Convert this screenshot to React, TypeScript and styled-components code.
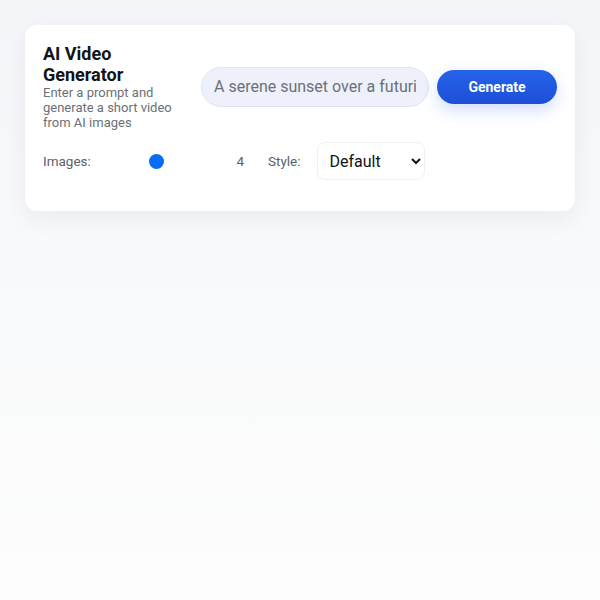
import { useState } from 'react';
import styled, { createGlobalStyle } from 'styled-components';

const GlobalStyle = createGlobalStyle`
  html, body {
    margin: 0;
    padding: 0;
    min-height: 100%;
  }
  body {
    font-family: Roboto, "Liberation Sans", Arial, sans-serif;
    background: linear-gradient(180deg, #f4f5f8 0%, #f9fafb 50%, #fdfdfd 100%);
    min-height: 600px;
  }
`;

const App = () => {
  const [prompt, setPrompt] = useState('A serene sunset over a futuristic city');
  const [count, setCount] = useState(4);
  const [style, setStyle] = useState('default');

  return (
    <>
      <GlobalStyle />
      <Page>
        <Card>
          <TopRow>
            <Intro>
              <Title>AI Video Generator</Title>
              <Subtitle>Enter a prompt and generate a short video from AI images</Subtitle>
            </Intro>
            <PromptInput value={prompt} onChange={(e) => setPrompt(e.target.value)} />
            <GenerateButton>Generate</GenerateButton>
          </TopRow>
          <Controls>
            <Label $width={100}>Images:</Label>
            <Slider
              type="range"
              min={1}
              max={10}
              value={count}
              onChange={(e) => setCount(Number(e.target.value))}
            />
            <Count>{count}</Count>
            <Label>Style:</Label>
            <StyleSelect value={style} onChange={(e) => setStyle(e.target.value)}>
              <option value="default">Default</option>
              <option value="cinematic">Cinematic</option>
              <option value="anime">Anime</option>
            </StyleSelect>
          </Controls>
        </Card>
      </Page>
    </>
  );
};

const Page = styled.div`
  padding: 25px;
`;

const Card = styled.div`
  background: #fff;
  border-radius: 12px;
  box-shadow: 0 8px 24px rgba(30, 40, 70, 0.06);
  padding: 18px 18px 31px;
  display: flex;
  flex-direction: column;
  gap: 12px;
`;

const TopRow = styled.div`
  display: flex;
  align-items: center;
`;

const Intro = styled.div`
  width: 140px;
  margin-right: 18px;
`;

const Title = styled.h1`
  margin: 0;
  font-size: 18px;
  line-height: 21px;
  font-weight: 700;
  color: #111318;
`;

const Subtitle = styled.p`
  margin: 0;
  font-size: 13px;
  line-height: 15px;
  color: #6b7078;
`;

const PromptInput = styled.input`
  width: 228px;
  height: 40px;
  box-sizing: border-box;
  border: 1px solid #dfe4f4;
  border-radius: 20px;
  background: #eef1fb;
  padding: 0 12px;
  font-family: inherit;
  font-size: 16px;
  color: #6b7078;
  outline: none;
`;

const GenerateButton = styled.button`
  margin-left: 8px;
  width: 120px;
  height: 34px;
  border: none;
  border-radius: 17px;
  background: linear-gradient(180deg, #2563eb 0%, #1d4fd6 100%);
  color: #fff;
  font-family: inherit;
  font-size: 14px;
  font-weight: 700;
  box-shadow: 0 6px 16px rgba(37, 99, 235, 0.22);
  cursor: pointer;
`;

const Controls = styled.div`
  display: flex;
  align-items: center;
`;

const Label = styled.span<{ $width?: number }>`
  width: ${(p) => (p.$width ? `${p.$width}px` : 'auto')};
  font-size: 13.5px;
  color: #5c6169;
`;

const Slider = styled.input`
  -webkit-appearance: none;
  appearance: none;
  width: 32px;
  height: 38px;
  margin: 0;
  background: transparent;
  &::-webkit-slider-runnable-track {
    height: 15px;
    background: transparent;
  }
  &::-webkit-slider-thumb {
    -webkit-appearance: none;
    width: 15px;
    height: 15px;
    border-radius: 50%;
    background: #0a6cf5;
    border: none;
  }
`;

const Count = styled.span`
  width: 69px;
  margin-right: 24px;
  text-align: right;
  font-size: 13.5px;
  color: #5c6169;
`;

const StyleSelect = styled.select`
  margin-left: 16px;
  width: 108px;
  height: 38px;
  padding: 0 8px 0 8px;
  border: 1px solid #eef0f3;
  border-radius: 8px;
  background: #fff;
  font-family: inherit;
  font-size: 16px;
  color: #111318;
`;

export default App;
